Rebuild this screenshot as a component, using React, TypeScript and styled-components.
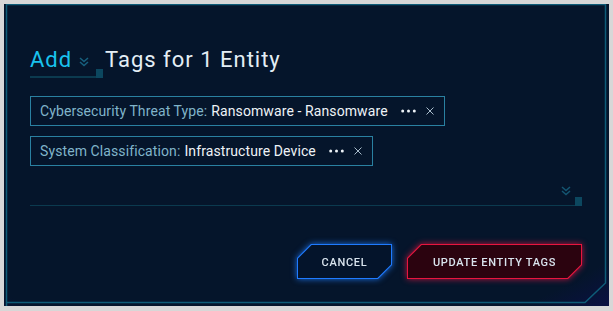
import React from 'react';
import styled, { createGlobalStyle } from 'styled-components';

const GlobalStyle = createGlobalStyle`
  body {
    margin: 0;
    background: #d7d7d7;
    font-family: Roboto, "Liberation Sans", sans-serif;
  }
`;

const tags = [
  { label: 'Cybersecurity Threat Type:', value: 'Ransomware - Ransomware' },
  { label: 'System Classification:', value: 'Infrastructure Device' },
];

const Chevrons = ({ color }: { color: string }) => (
  <svg width="10" height="10" viewBox="0 0 10 10" fill="none" stroke={color} strokeWidth="1.5">
    <polyline points="1,1 5,4.6 9,1" />
    <polyline points="1,5 5,8.6 9,5" />
  </svg>
);

const Dots = () => (
  <svg width="15" height="4" viewBox="0 0 15 4" fill="#eef3f7">
    <circle cx="1.7" cy="2" r="1.5" />
    <circle cx="7.5" cy="2" r="1.5" />
    <circle cx="13.3" cy="2" r="1.5" />
  </svg>
);

const CloseIcon = () => (
  <svg width="8" height="8" viewBox="0 0 8 8" stroke="#a9bccb" strokeWidth="1">
    <line x1="0.5" y1="0.5" x2="7.5" y2="7.5" />
    <line x1="7.5" y1="0.5" x2="0.5" y2="7.5" />
  </svg>
);

const App = () => {
  return (
    <>
      <GlobalStyle />
      <Panel>
        <Frame width="605" height="302" viewBox="0 0 605 302" fill="none">
          <polyline
            points="2.5,302 2.5,0.5 601.5,0.5 601.5,279 581,298.5 2.5,298.5"
            stroke="#0e5c78"
            strokeWidth="1.5"
          />
        </Frame>

        <Title>
          <Select>
            <Mode>Add</Mode>
            <Chevrons color="#17607e" />
          </Select>
          <span>Tags for 1 Entity</span>
        </Title>

        <Field>
          <TagList>
            {tags.map((t) => (
              <Tag key={t.label}>
                <Label>{t.label}</Label>
                <Value>{t.value}</Value>
                <TagAction $gap={13}>
                  <Dots />
                </TagAction>
                <TagAction $gap={10}>
                  <CloseIcon />
                </TagAction>
              </Tag>
            ))}
          </TagList>
          <FieldChevron>
            <Chevrons color="#145571" />
          </FieldChevron>
        </Field>

        <Actions>
          <Glow $glow="rgba(30, 125, 255, 0.85)">
            <CutButton $width={95} $border="#1f7bff" $fill="#04142b">
              <ButtonText>CANCEL</ButtonText>
            </CutButton>
          </Glow>
          <Glow $glow="rgba(235, 20, 65, 0.8)">
            <CutButton $width={175} $border="#e8153f" $fill="#2b030f">
              <ButtonText>UPDATE ENTITY TAGS</ButtonText>
            </CutButton>
          </Glow>
        </Actions>
      </Panel>
    </>
  );
};

export default App;

const Panel = styled.div`
  position: relative;
  box-sizing: border-box;
  width: 605px;
  height: 302px;
  margin: 4px;
  padding: 43px 27px 0 26px;
  background: radial-gradient(ellipse 80% 90% at 45% 35%, #05152b 88%, #0a1043 100%);
`;

const Frame = styled.svg`
  position: absolute;
  top: 0;
  left: 0;
  pointer-events: none;
`;

const Title = styled.h2`
  margin: 0;
  display: flex;
  align-items: flex-start;
  font-size: 22px;
  font-weight: 400;
  line-height: 26px;
  letter-spacing: 1px;
  color: #e4eef5;
`;

const Select = styled.div`
  position: relative;
  box-sizing: border-box;
  display: inline-flex;
  align-items: center;
  gap: 7px;
  width: 66px;
  margin-right: 9px;
  padding-bottom: 3px;
  border-bottom: 2px solid #0b3a4f;

  svg {
    margin-top: 3px;
  }

  &::after {
    content: '';
    position: absolute;
    right: -7px;
    bottom: -2px;
    width: 7px;
    height: 9px;
    background: #0c475f;
  }
`;

const Mode = styled.span`
  color: #19c2ee;
`;

const Field = styled.div`
  position: relative;
  margin: 18px 7px 0 0;
  padding-bottom: 39px;
  border-bottom: 1px solid #0b3a4f;

  &::after {
    content: '';
    position: absolute;
    right: -7px;
    bottom: -1px;
    width: 7px;
    height: 9px;
    background: #0c475f;
  }
`;

const FieldChevron = styled.span`
  position: absolute;
  right: 4px;
  bottom: 9px;
  display: flex;
`;

const TagList = styled.div`
  display: flex;
  flex-direction: column;
  align-items: flex-start;
  gap: 10px;
`;

const Tag = styled.div`
  box-sizing: border-box;
  display: inline-flex;
  align-items: center;
  height: 30px;
  padding: 0 10px 0 9px;
  border: 1px solid #2a81a1;
  font-size: 14px;
  letter-spacing: 0.1px;
  white-space: nowrap;
`;

const Label = styled.span`
  color: #80b4ca;
`;

const Value = styled.span`
  margin-left: 4px;
  color: #eef3f7;
`;

const TagAction = styled.span<{ $gap: number }>`
  display: flex;
  margin-left: ${({ $gap }) => $gap}px;
`;

const Actions = styled.div`
  display: flex;
  justify-content: flex-end;
  gap: 15px;
  margin-top: 38px;
`;

const Glow = styled.span<{ $glow: string }>`
  display: inline-flex;
  filter: drop-shadow(0 0 3px ${({ $glow }) => $glow});
`;

const CutButton = styled.button<{ $width: number; $border: string; $fill: string }>`
  position: relative;
  width: ${({ $width }) => $width}px;
  height: 35px;
  padding: 0;
  border: none;
  text-align: center;
  background: ${({ $border }) => $border};
  clip-path: polygon(14px 0, 100% 0, 100% calc(100% - 14px), calc(100% - 14px) 100%, 0 100%, 0 14px);
  cursor: pointer;

  &::before {
    content: '';
    position: absolute;
    inset: 1px;
    background: ${({ $fill }) => $fill};
    clip-path: polygon(13.6px 0, 100% 0, 100% calc(100% - 13.6px), calc(100% - 13.6px) 100%, 0 100%, 0 13.6px);
  }
`;

const ButtonText = styled.span`
  position: relative;
  font-family: Roboto, "Liberation Sans", sans-serif;
  font-size: 11px;
  font-weight: 500;
  letter-spacing: 0.7px;
  color: #d9e4ee;
`;
